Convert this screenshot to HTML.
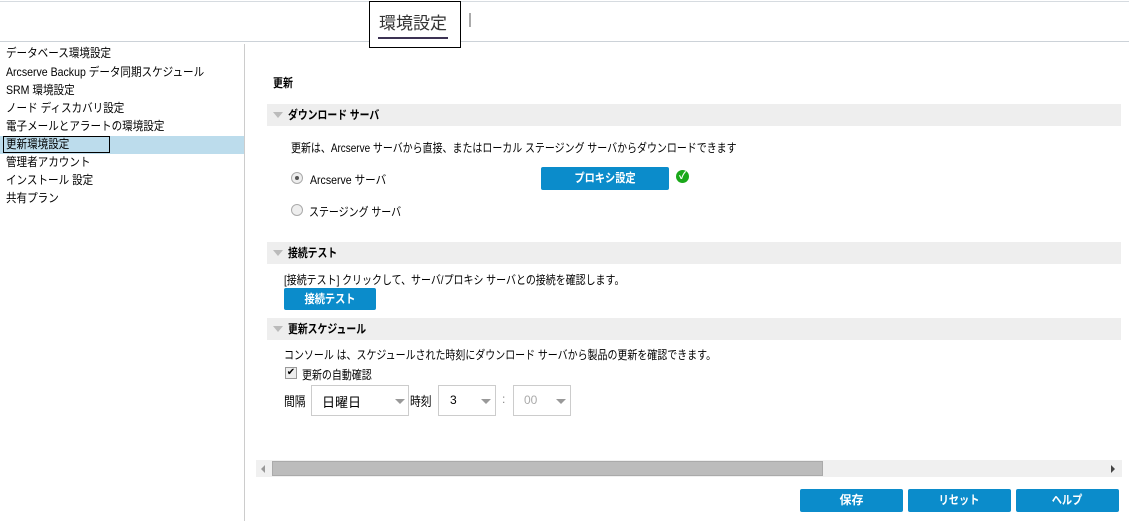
<!DOCTYPE html>
<html><head><meta charset="utf-8"><style>
*{margin:0;padding:0;box-sizing:border-box}
body{width:1129px;height:521px;background:#fff;font-family:"Liberation Sans","Noto Sans CJK JP",sans-serif;font-size:12px;color:#000;position:relative;overflow:hidden}
.a{position:absolute;white-space:nowrap}
.s{transform:scaleX(0.83);transform-origin:0 0}
.m{transform:scaleX(0.88);transform-origin:0 0}
.sec{position:absolute;left:267px;width:854px;height:22px;background:#eeeeee}
.sec span{position:absolute;left:21px;top:0;font-weight:bold;line-height:22px;white-space:nowrap;transform:scaleX(0.82);transform-origin:0 0}
.sec:before{content:"";position:absolute;left:6px;top:8px;border-left:5px solid transparent;border-right:5px solid transparent;border-top:6px solid #bbb}
.btn{position:absolute;background:#0b8ccb;color:#fff;font-weight:bold;text-align:center;border-radius:2px}
.li{position:absolute;left:6px;line-height:18px;white-space:nowrap;transform:scaleX(0.88);transform-origin:0 0}
.sel{position:absolute;border:1px solid #ccc;height:31px;background:#fff}
.arr{position:absolute;border-left:5px solid transparent;border-right:5px solid transparent;border-top:5px solid #999}
</style></head><body>
<div class="a" style="left:0;top:1px;width:1129px;height:1px;background:#d6dbe0"></div>
<div class="a" style="left:0;top:41px;width:1129px;height:1px;background:#ccd2d8"></div>
<div class="a" style="left:369px;top:1px;width:92px;height:47px;border:1px solid #000;background:#fff"></div>
<div class="a" style="left:379px;top:9px;font-size:17px;color:#333">環境設定</div>
<div class="a" style="left:378px;top:37px;width:70px;height:2px;background:#3c3253"></div>
<div class="a" style="left:469px;top:13px;width:2px;height:14px;background:#aaa"></div>
<div class="a" style="left:244px;top:44px;width:1px;height:477px;background:#ccc"></div>
<div class="a" style="left:0;top:136px;width:244px;height:18px;background:#bcdcec"></div>
<div class="a" style="left:3px;top:136px;width:107px;height:17px;border:1px solid #000"></div>
<div class="li" style="top:44px">データベース環境設定</div>
<div class="li" style="top:63px">Arcserve Backup データ同期スケジュール</div>
<div class="li" style="top:81px">SRM 環境設定</div>
<div class="li" style="top:99px">ノード ディスカバリ設定</div>
<div class="li" style="top:117px">電子メールとアラートの環境設定</div>
<div class="li" style="top:135px">更新環境設定</div>
<div class="li" style="top:153px">管理者アカウント</div>
<div class="li" style="top:171px">インストール 設定</div>
<div class="li" style="top:189px">共有プラン</div>
<div class="a s" style="left:273px;top:74px;font-weight:bold">更新</div>
<div class="sec" style="top:104px"><span>ダウンロード サーバ</span></div>
<div class="a s" style="left:291px;top:139px">更新は、Arcserve サーバから直接、またはローカル ステージング サーバからダウンロードできます</div>
<div class="a" style="left:291px;top:172px;width:12px;height:12px;border-radius:50%;border:1px solid #aaa;background:#eee"><div style="margin:3px;width:4px;height:4px;border-radius:50%;background:#555"></div></div>
<div class="a m" style="left:310px;top:171px">Arcserve サーバ</div>
<div class="btn" style="left:541px;top:167px;width:128px;height:23px;line-height:23px"><span style="display:inline-block;transform:scaleX(0.85)">プロキシ設定</span></div>
<div class="a" style="left:676px;top:170px;width:13px;height:13px;border-radius:50%;background:#1aa81a;color:#fff;font-size:10px;line-height:13px;text-align:center;font-weight:bold">✓</div>
<div class="a" style="left:291px;top:204px;width:12px;height:12px;border-radius:50%;border:1px solid #aaa;background:#eee"></div>
<div class="a s" style="left:309px;top:203px">ステージング サーバ</div>
<div class="sec" style="top:242px"><span>接続テスト</span></div>
<div class="a s" style="left:284px;top:271px">[接続テスト] クリックして、サーバ/プロキシ サーバとの接続を確認します。</div>
<div class="btn" style="left:284px;top:288px;width:92px;height:22px;line-height:22px"><span style="display:inline-block;transform:scaleX(0.85)">接続テスト</span></div>
<div class="sec" style="top:318px"><span>更新スケジュール</span></div>
<div class="a s" style="left:284px;top:346px">コンソール は、スケジュールされた時刻にダウンロード サーバから製品の更新を確認できます。</div>
<div class="a" style="left:285px;top:367px;width:12px;height:12px;border:1px solid #999;background:#eee;font-size:10px;line-height:10px;text-align:center">✔</div>
<div class="a s" style="left:302px;top:366px">更新の自動確認</div>
<div class="a s" style="left:284px;top:391px;font-size:13px">間隔</div>
<div class="sel" style="left:311px;top:385px;width:98px"></div>
<div class="a" style="left:322px;top:392px;font-size:13px">日曜日</div>
<div class="arr" style="left:395px;top:399px"></div>
<div class="a s" style="left:410px;top:391px;font-size:13px">時刻</div>
<div class="sel" style="left:438px;top:385px;width:58px"></div>
<div class="a" style="left:450px;top:393px">3</div>
<div class="arr" style="left:481px;top:399px"></div>
<div class="a" style="left:502px;top:392px;color:#888">:</div>
<div class="sel" style="left:513px;top:385px;width:58px"></div>
<div class="a" style="left:524px;top:393px;color:#aaa">00</div>
<div class="arr" style="left:556px;top:399px"></div>
<div class="a" style="left:256px;top:460px;width:866px;height:17px;background:#f0f0f0"></div>
<div class="a" style="left:261px;top:465px;border-top:4px solid transparent;border-bottom:4px solid transparent;border-right:4px solid #999"></div>
<div class="a" style="left:272px;top:461px;width:551px;height:15px;background:#bcbcbc;border:1px solid #aaa"></div>
<div class="a" style="left:1111px;top:465px;border-top:4px solid transparent;border-bottom:4px solid transparent;border-left:4px solid #444"></div>
<div class="btn" style="left:800px;top:489px;width:103px;height:23px;line-height:23px">保存</div>
<div class="btn" style="left:908px;top:489px;width:103px;height:23px;line-height:23px"><span style="display:inline-block;transform:scaleX(0.85)">リセット</span></div>
<div class="btn" style="left:1016px;top:489px;width:103px;height:23px;line-height:23px"><span style="display:inline-block;transform:scaleX(0.85)">ヘルプ</span></div>
</body></html>
